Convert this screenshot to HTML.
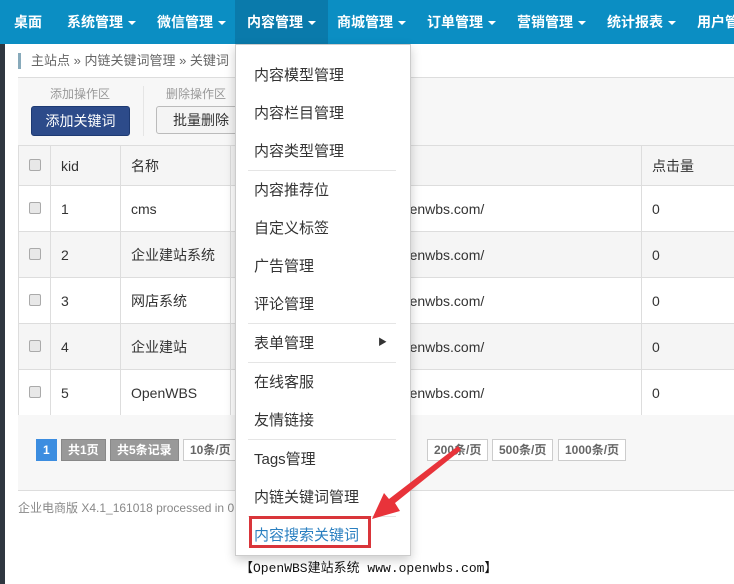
<!DOCTYPE html>
<html><head><meta charset="utf-8"><style>
*{box-sizing:border-box;margin:0;padding:0}
body{width:734px;height:584px;overflow:hidden;background:#fff;font-family:"Liberation Sans","Noto Sans CJK SC",sans-serif;position:relative;color:#333}
.strip{position:absolute;left:0;top:44px;width:5px;height:540px;background:#2f3740}
.nav{position:absolute;left:0;top:0;width:734px;height:44px;background:#0b8ec3;white-space:nowrap}
.nav span{position:absolute;top:0;height:44px;line-height:44px;color:#fff;font-weight:bold;font-size:14px}
.nav .act{background:#0a7aab}
.caret{display:inline-block;width:0;height:0;border-left:4px solid transparent;border-right:4px solid transparent;border-top:4px solid #fff;vertical-align:middle;margin-left:5px}
.bc{position:absolute;left:18px;top:53px;height:16px;border-left:3px solid #8ab;padding-left:10px;font-size:13px;color:#666;line-height:16px}
.tool{position:absolute;left:18px;top:77px;width:716px;height:68px;background:#f7f7f7;border-top:1px solid #ddd}
.lbl{position:absolute;font-size:12px;color:#999}
.b1{position:absolute;left:31px;top:106px;width:99px;height:30px;background:#2d4b8a;border:1px solid #1e3a72;border-radius:3px;color:#fff;font-size:14px;text-align:center;line-height:28px}
.b2{position:absolute;left:156px;top:106px;width:90px;height:28px;background:#f4f4f4;border:1px solid #bbb;border-radius:3px;font-size:14px;text-align:center;line-height:26px}
table{position:absolute;left:18px;top:145px;border-collapse:collapse;width:730px;font-size:14px}
td{border:1px solid #ddd;height:46px;padding-left:10px}
tr:nth-child(odd) td{background:#f5f5f5}
tr:first-child td{height:40px}
.cb{display:inline-block;width:12px;height:12px;border:1px solid #aaa;border-radius:2px;background:#e8e8e8}
.pg{position:absolute;left:18px;top:415px;width:716px;height:76px;background:#f7f7f7;border-bottom:1px solid #ddd}
.pg span{position:absolute;top:24px;height:22px;line-height:20px;font-size:12px;font-weight:bold;padding:0 6px;border:1px solid #ccc;background:#fff;color:#666}
.foot{position:absolute;left:18px;top:499px;font-size:12px;color:#888}
.dd{position:absolute;left:235px;top:44px;width:176px;height:512px;background:#fff;border:1px solid #ccc;box-shadow:0 4px 10px rgba(0,0,0,.2)}
.dd div{position:absolute;left:18px;font-size:15px;color:#333}
.sep{position:absolute;left:12px;width:148px;height:1px;background:#e5e5e5}
.wm{position:absolute;left:240px;top:557px;font-family:"Liberation Mono","Noto Sans CJK SC",monospace;font-size:13px;color:#111}
</style></head><body>
<div class="nav">
<span style="left:14px">桌面</span>
<span style="left:67px">系统管理<i class="caret"></i></span>
<span style="left:157px">微信管理<i class="caret"></i></span>
<span class="act" style="left:235px;padding:0 12px">内容管理<i class="caret"></i></span>
<span style="left:337px">商城管理<i class="caret"></i></span>
<span style="left:427px">订单管理<i class="caret"></i></span>
<span style="left:517px">营销管理<i class="caret"></i></span>
<span style="left:607px">统计报表<i class="caret"></i></span>
<span style="left:697px">用户管</span>
</div>
<div class="strip"></div>
<div class="bc">主站点 » 内链关键词管理 » 关键词</div>
<div class="tool"></div>
<div class="lbl" style="left:50px;top:85px">添加操作区</div>
<div class="lbl" style="left:166px;top:85px">删除操作区</div>
<div style="position:absolute;left:143px;top:86px;width:1px;height:50px;background:#e5e5e5"></div>
<div class="b1">添加关键词</div>
<div class="b2">批量删除</div>
<table>
<tr><td style="width:32px"><i class="cb"></i></td><td style="width:70px">kid</td><td style="width:110px">名称</td><td style="width:411px"></td><td>点击量</td></tr>
<tr><td><i class="cb"></i></td><td>1</td><td>cms</td><td style="padding-left:163px">openwbs.com/</td><td>0</td></tr>
<tr><td><i class="cb"></i></td><td>2</td><td>企业建站系统</td><td style="padding-left:163px">openwbs.com/</td><td>0</td></tr>
<tr><td><i class="cb"></i></td><td>3</td><td>网店系统</td><td style="padding-left:163px">openwbs.com/</td><td>0</td></tr>
<tr><td><i class="cb"></i></td><td>4</td><td>企业建站</td><td style="padding-left:163px">openwbs.com/</td><td>0</td></tr>
<tr><td><i class="cb"></i></td><td>5</td><td>OpenWBS</td><td style="padding-left:163px">openwbs.com/</td><td>0</td></tr>
</table>
<div class="pg">
<span style="left:18px;background:#3c8de0;border-color:#3c8de0;color:#fff">1</span>
<span style="left:43px;background:#999;border-color:#888;color:#fff">共1页</span>
<span style="left:92px;background:#999;border-color:#888;color:#fff">共5条记录</span>
<span style="left:165px">10条/页</span>
<span style="left:409px">200条/页</span>
<span style="left:474px">500条/页</span>
<span style="left:540px">1000条/页</span>
</div>
<div class="foot">企业电商版 X4.1_161018 processed in 0</div>
<div class="dd">
<div style="top:19px">内容模型管理</div>
<div style="top:57px">内容栏目管理</div>
<div style="top:95px">内容类型管理</div>
<i class="sep" style="top:125px"></i>
<div style="top:134px">内容推荐位</div>
<div style="top:172px">自定义标签</div>
<div style="top:210px">广告管理</div>
<div style="top:248px">评论管理</div>
<i class="sep" style="top:278px"></i>
<div style="top:287px">表单管理</div>
<div style="left:142px;top:290px;font-size:9px">▶</div>
<i class="sep" style="top:317px"></i>
<div style="top:326px">在线客服</div>
<div style="top:364px">友情链接</div>
<i class="sep" style="top:394px"></i>
<div style="top:403px">Tags管理</div>
<div style="top:441px">内链关键词管理</div>
<i class="sep" style="top:471px"></i>
<div style="top:479px;color:#2a7fc0">内容搜索关键词</div>
</div>
<div style="position:absolute;left:249px;top:516px;width:122px;height:32px;border:3px solid #d9353a"></div>
<svg style="position:absolute;left:0;top:0" width="734" height="584"><polygon points="458,446 461,450 395,503 400,511 372,519 384,493 389,499" fill="#e8333a"/></svg>
<div class="wm">【OpenWBS建站系统 www.openwbs.com】</div>
</body></html>
